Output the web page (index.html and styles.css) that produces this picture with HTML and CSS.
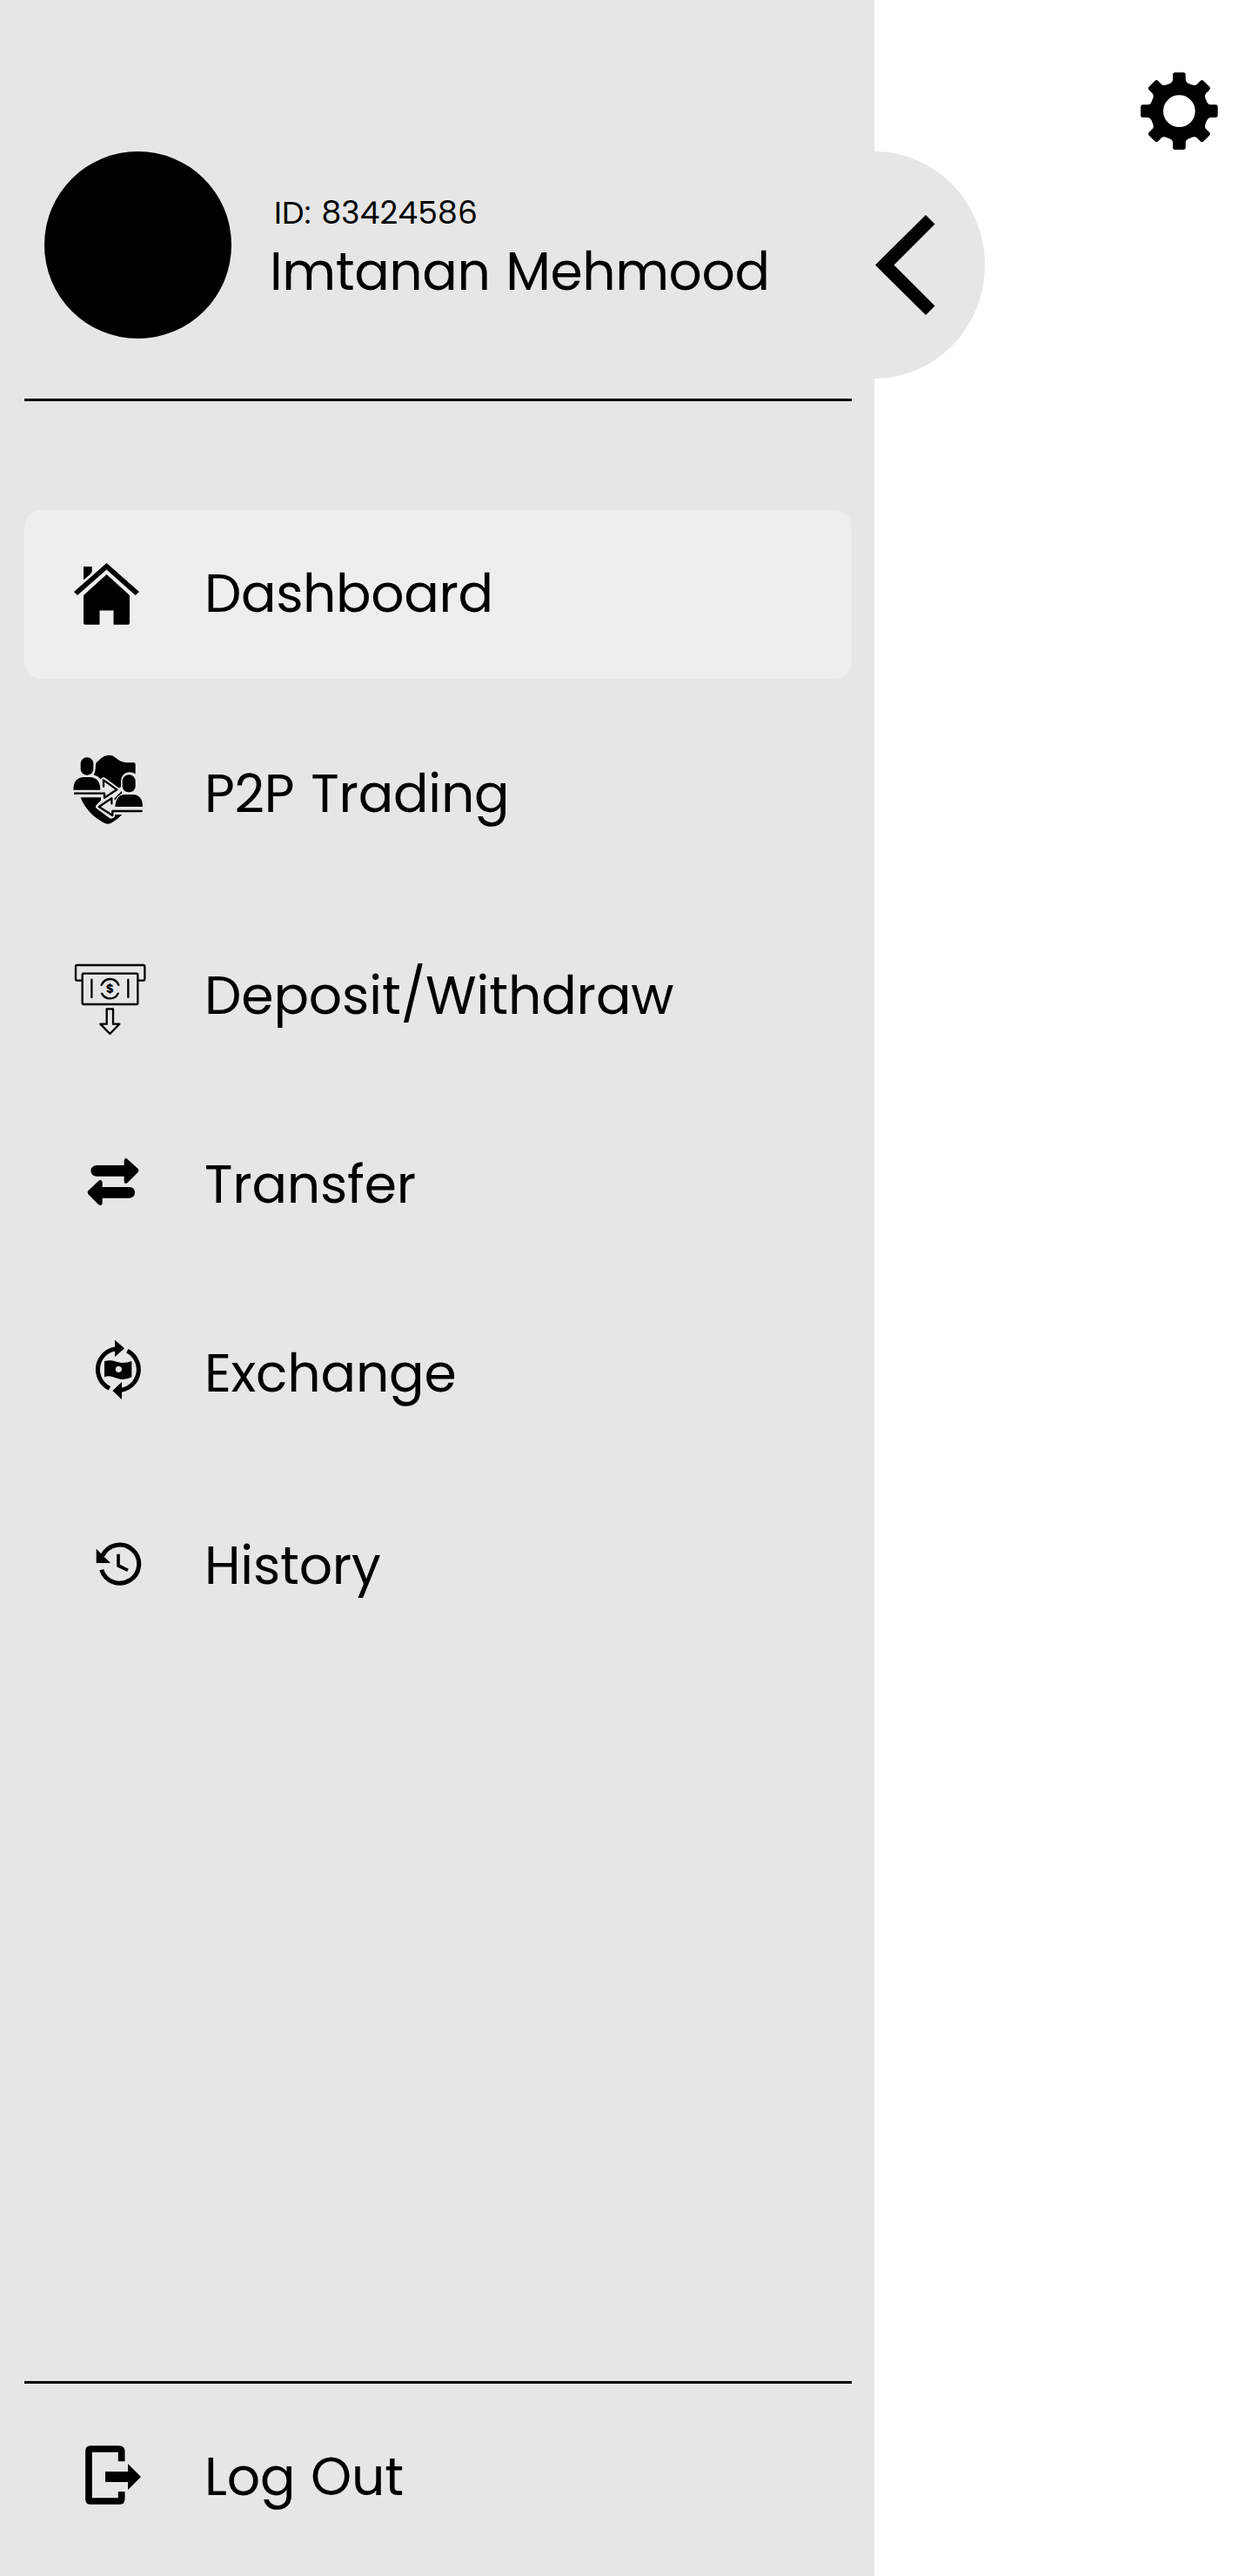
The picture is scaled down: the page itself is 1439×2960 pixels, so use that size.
FILE: index.html
```html
<!DOCTYPE html>
<html lang="en">
<head>
<meta charset="utf-8">
<title>Menu</title>
<link rel="stylesheet" href="styles.css">
</head>
<body>
<div class="page">
  <aside class="sidebar">
    <header class="profile">
      <div class="avatar"></div>
      <div class="identity">
        <div class="user-id"><span>ID: 83424586</span></div>
        <div class="user-name"><span>Imtanan Mehmood</span></div>
      </div>
    </header>
    <nav class="menu">
      <a class="item active">
        <svg class="icon" viewBox="70 628 110 110"><path d="M122.5 647 160 680l-4.500 4-33-29.500L89 684l-4-4ZM96 651h9.700v6l-2 3-7.700 6.500ZM122.500 660 149 684v32l-1 1.700h-17.500v-16.200h-16v16.200H97l-1-1.700v-32Z"/></svg>
        <span class="label dashboard">Dashboard</span>
      </a>
      <a class="item p2p-row">
        <svg class="icon" viewBox="0 9 330 330">
          <path d="M120 68Q122 62 130 57 148 38 165 38 180 38 190 48 205 62 228 64H252Q257 64 257 70V103Q248 97 236 97 212 98 207 125V147L200 152 152 116Q144 114 137 121 128 110 113 106 120 95 120 68Z"/>
          <path d="M68 184H138V194L120 212Q118 218 124 223L168 256Q178 260 182 250L184 243H211Q195 260 176 271 163 279 150 272 135 265 110 245 78 215 68 184Z"/>
          <rect x="68" y="46" width="44" height="61" rx="21"/>
          <path d="M43 158Q43 115 80 114H100Q136 116 136 158Z"/>
          <rect x="212" y="106" width="45" height="60" rx="21"/>
          <path d="M187 216Q190 175 220 174H248Q282 176 282 216Z"/>
          <path class="halo" d="M150 170V185L193 157 147 124V146M178 231V246L131 216 175 187V205"/>
          <path class="line" d="M48 170H150V185L193 157 147 124V146M278 231H178V246L131 216 175 187V205"/>
          <path d="M184 188 210 161V170L196 181 186 194Z"/>
        </svg>
        <span class="label p2p">P2P Trading</span>
      </a>
      <a class="item deposit-row">
        <svg class="icon" viewBox="0 0 330 330">
          <path class="line" d="M72 110H56Q51 110 51 105V62Q51 57 56 57H284Q289 57 289 62V105Q289 110 284 110H267M77 86H262Q265 86 265 89V189Q265 192 262 192H77Q74 192 74 189V89Q74 86 77 86ZM106 107V168M232 107V168M140 125Q150 105 169 105 190 105 199 125M141 155Q150 172 169 172 190 172 197 155M158 208H180V260H202L169 294 136 260H158Z"/>
          <text class="dollar" x="169" y="154">$</text>
        </svg>
        <span class="label deposit">Deposit/Withdraw</span>
      </a>
      <a class="item transfer-row">
        <svg class="icon" viewBox="-30 -9 330 330"><path d="M92 87H188V70Q190 61 197 64L236 99Q241 105 236 111L199 148Q191 153 188 144V125H92Q74 123 73 106 74 89 92 87ZM206 162H113V145Q110 135 102 139L64 175Q59 181 64 187L100 223Q109 229 113 219V200H206Q225 199 225 181 225 163 206 162Z"/></svg>
        <span class="label">Transfer</span>
      </a>
      <a class="item exchange-row">
        <svg class="icon" viewBox="-60 -3 330 330">
          <path class="ring" d="M108 211A72 72 0 0 1 128 75M169 82A72 72 0 0 1 148 217"/>
          <path d="M126 44 159 73 126 103ZM150 189 118 219 150 249Z"/>
          <path fill-rule="evenodd" d="M90 118Q103 113 113 115 125 116 137 121 160 126 184 117V172Q165 182 148 180 130 176 115 170 103 167 90 172ZM139 134a11 11 0 1 0 .1 0Z"/>
        </svg>
        <span class="label">Exchange</span>
      </a>
      <a class="item history-row">
        <svg class="icon" viewBox="-60 -15 330 330">
          <path class="ring" d="M80 161A66 66 0 1 0 84 112"/>
          <path d="M62 89V138H111Z"/>
          <path class="hand" d="M138 107V147L171 163"/>
        </svg>
        <span class="label">History</span>
      </a>
    </nav>
    <footer class="footer">
      <a class="item">
        <svg class="icon" viewBox="150 213 330 330">
          <path class="door" d="M359 325V290Q359 282 350 282H253Q246 282 246 289V455Q246 462 253 462H350Q359 462 359 455V429"/>
          <path d="M303 360H381V333L426 378 381 423V396H303Z"/>
        </svg>
        <span class="label logout">Log Out</span>
      </a>
    </footer>
    <button class="collapse" aria-label="Close menu">
      <svg viewBox="1005 174 127 261"><path d="M1006 304.500 1064 247l10.500 10.500-47 47 47 47L1064 362Z"/></svg>
    </button>
  </aside>
  <main class="content">
    <svg class="settings" viewBox="-133 -134 270 270">
      <defs><path id="tooth" d="M-42-91Q-22-98-22-108V-125Q-22-133-14-133H14Q22-133 22-125V-108Q22-98 42-91Z"/></defs>
      <circle class="hub" r="77"/>
      <use href="#tooth"/><use href="#tooth" transform="rotate(45)"/><use href="#tooth" transform="rotate(90)"/><use href="#tooth" transform="rotate(135)"/><use href="#tooth" transform="rotate(180)"/><use href="#tooth" transform="rotate(225)"/><use href="#tooth" transform="rotate(270)"/><use href="#tooth" transform="rotate(315)"/>
    </svg>
  </main>
</div>
</body>
</html>
```
FILE: styles.css
```css
* { box-sizing: border-box; }
body {
  margin: 0;
  background: #fff;
  color: #000;
  font-family: Poppins, Inter, "Liberation Sans", sans-serif;
}
.page { display: flex; height: 2960px; }
.sidebar {
  position: relative;
  display: flex;
  flex-direction: column;
  width: 1005px;
  padding: 0 26px 0 28px;
  background: #e6e6e6;
}
.profile {
  display: flex;
  height: 461px;
  padding: 174px 0 0 23px;
  border-bottom: 3px solid #000;
}
.avatar { width: 215px; height: 215px; border-radius: 50%; background: #000; }
.identity { margin: 41px 0 0 44px; white-space: nowrap; }
.user-id { padding-left: 5px; font-size: 36px; line-height: 60px; letter-spacing: 0.2px; word-spacing: 2px; }
.user-name { font-size: 60px; line-height: 74px; letter-spacing: -0.4px; word-spacing: 2px; }
.menu { padding-top: 125px; }
.item { display: flex; align-items: center; height: 194px; padding-left: 42px; border-radius: 20px; }
.active { background: #eee; }
.p2p-row { margin-top: 36px; }
.deposit-row { margin-top: 38px; }
.transfer-row, .exchange-row { margin-top: 23px; }
.history-row { margin-top: 27px; }
.icon { width: 110px; height: 110px; flex: none; }
.label { margin-left: 55px; font-size: 60px; line-height: 80px; letter-spacing: -0.2px; white-space: nowrap; }
.menu .label { margin-bottom: 2px; }
.dashboard { letter-spacing: -0.4px; }
.p2p { word-spacing: 3px; }
.deposit { letter-spacing: -0.12px; }
.logout { word-spacing: 2px; }
.line { fill: none; stroke: #000; stroke-width: 7; stroke-linejoin: round; stroke-linecap: round; }
.halo { fill: none; stroke: #e6e6e6; stroke-width: 17; stroke-linejoin: round; }
.ring { fill: none; stroke: #000; stroke-width: 15; }
.hand { fill: none; stroke: #000; stroke-width: 11; }
.door { fill: none; stroke: #000; stroke-width: 23; }
.dollar { font-size: 42px; font-weight: 700; text-anchor: middle; }
.footer { margin-top: auto; padding: 10px 0 17px; border-top: 3px solid #000; }
.collapse {
  position: absolute;
  left: 1005px;
  top: 174px;
  width: 127px;
  height: 261px;
  padding: 0;
  border: 0;
  border-radius: 0 127px 127px 0 / 0 130.5px 130.5px 0;
  background: #e6e6e6;
}
.collapse svg { display: block; width: 127px; height: 261px; }
.content { display: flex; flex: 1; justify-content: flex-end; align-items: flex-start; padding: 83px 38px 0 0; }
.settings { width: 90px; height: 90px; }
.hub { fill: none; stroke: #000; stroke-width: 44; }
```
